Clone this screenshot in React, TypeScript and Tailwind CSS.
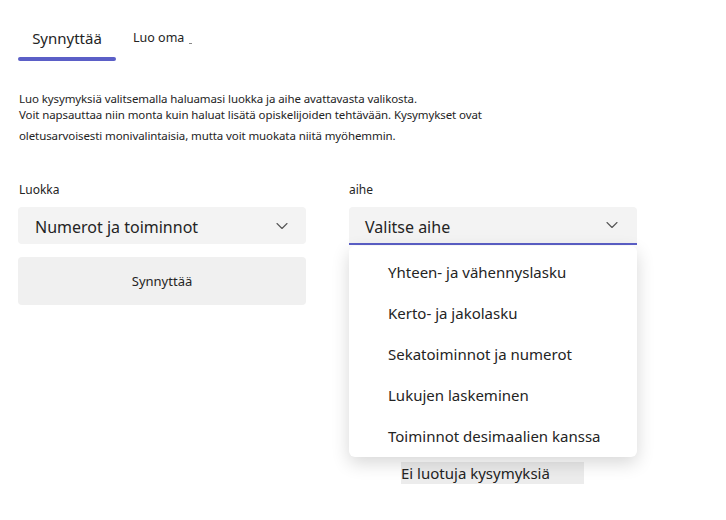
import { ChevronDown } from "lucide-react";

const TOPICS = [
  "Yhteen- ja vähennyslasku",
  "Kerto- ja jakolasku",
  "Sekatoiminnot ja numerot",
  "Lukujen laskeminen",
  "Toiminnot desimaalien kanssa",
];

export default function App() {
  return (
    <main className="relative h-[520px] w-[726px] overflow-hidden bg-white text-[#242424] [font-family:'Noto_Sans',sans-serif]">
      {/* Tabs */}
      <nav className="flex items-start pl-[18px] pt-[27px]">
        <div className="flex w-[98px] flex-col items-center">
          <span className="text-[15px] leading-[22px]">Synnyttää</span>
          <span className="mt-[8px] h-[4px] w-full rounded-full bg-[#5b5fc7]" />
        </div>
        <span className="ml-[17px] text-[12.5px] leading-[22px]">Luo oma</span>
        <span className="ml-[5px] mt-[16px] h-px w-[3px] bg-[#888]" />
      </nav>

      {/* Intro */}
      <div className="mt-[30px] pl-[19px] text-[11.5px] leading-[16px] tracking-[-0.1px]">
        <p>Luo kysymyksiä valitsemalla haluamasi luokka ja aihe avattavasta valikosta.</p>
        <p>Voit napsauttaa niin monta kuin haluat lisätä opiskelijoiden tehtävään. Kysymykset ovat</p>
        <p className="mt-[5px]">oletusarvoisesti monivalintaisia, mutta voit muokata niitä myöhemmin.</p>
      </div>

      {/* Form */}
      <div className="mt-[38px] flex gap-[43px] pl-[18px]">
        <div className="flex w-[288px] flex-col">
          <label className="pl-[1px] text-[12px] leading-[16px]">Luokka</label>
          <div className="mt-[9px] flex h-[37px] items-center justify-between rounded-[4px] bg-[#f3f3f3] pl-[17px] pr-[14px]">
            <span className="pt-[3px] text-[16px]">Numerot ja toiminnot</span>
            <ChevronDown className="h-[20px] w-[20px] text-[#555]" strokeWidth={1.3} />
          </div>
          <button className="mt-[13px] h-[48px] rounded-[4px] bg-[#f0f0f0] pt-[2px] text-[13px]">Synnyttää</button>
        </div>

        <div className="relative flex w-[288px] flex-col">
          <label className="text-[12px] leading-[16px]">aihe</label>
          <div className="mt-[9px] flex h-[38px] items-center justify-between rounded-t-[4px] border-b-2 border-[#5b5fc7] bg-[#f3f3f3] pl-[16px] pr-[15px]">
            <span className="pt-[4px] text-[16px]">Valitse aihe</span>
            <ChevronDown className="h-[20px] w-[20px] text-[#555]" strokeWidth={1.3} />
          </div>

          {/* Empty state behind the menu */}
          <div className="ml-[52px] mt-[217px] flex h-[22px] w-[183px] items-center bg-[#ececec] text-[15px]">
            Ei luotuja kysymyksiä
          </div>

          {/* Open menu */}
          <ul className="absolute left-0 top-[64px] w-[288px] rounded-[6px] bg-white pt-[6px] shadow-[0_6px_18px_rgba(0,0,0,0.16)]">
            {TOPICS.map((t) => (
              <li key={t} className="flex h-[41px] items-center pl-[39px] text-[15px]">
                {t}
              </li>
            ))}
          </ul>
        </div>
      </div>
    </main>
  );
}
